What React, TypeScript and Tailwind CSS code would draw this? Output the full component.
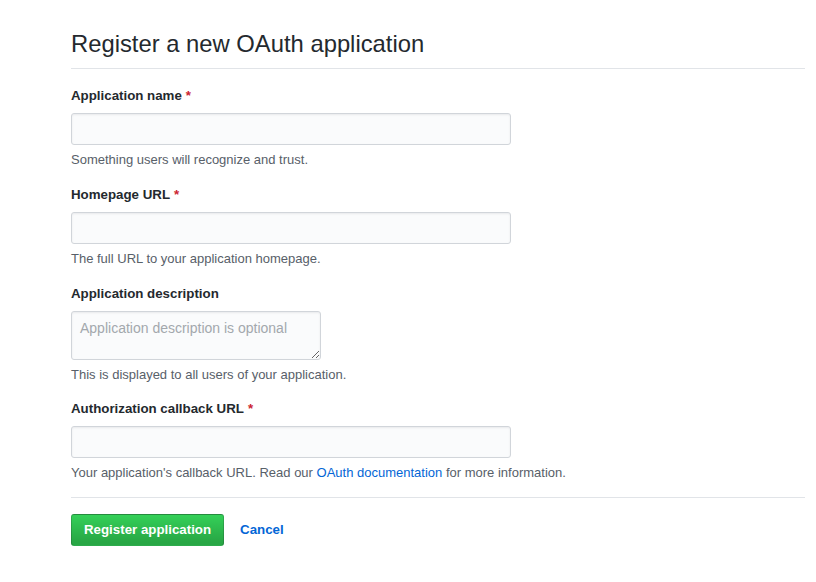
import React from "react";

type FieldProps = {
    label: string;
    required?: boolean;
    note: React.ReactNode;
    children: React.ReactNode;
    gapClass?: string;
};

function Field({ label, required, note, children, gapClass = "mb-[16px]" }: FieldProps) {
    return (
        <dl className={gapClass}>
            <dt className="mb-[7px] h-[20px]">
                <label className="block text-[13.3px] leading-[20px] font-bold text-[#24292e]">
                    {label}
                    {required && <span className="text-[#cb2431] ml-[4px]">*</span>}
                </label>
            </dt>
            <dd>
                {children}
                <p className="mt-[6px] text-[13px] leading-[18px] text-[#586069]">{note}</p>
            </dd>
        </dl>
    );
}

const inputClass =
    "block w-[440px] h-[32px] px-[8px] text-[14px] bg-[#fafbfc] border border-[#d1d5da] rounded-[3px] shadow-[inset_0_1px_2px_rgba(27,31,35,0.075)] outline-none";

export default function App() {
    return (
        <div
            className="min-h-[582px] bg-white pl-[71px] pr-[11px] text-[#24292e] leading-[20px]"
            style={{ fontFamily: '"Liberation Sans", Arial, sans-serif' }}
        >
            <h2 className="pt-[26px] pb-[6px] text-[23.8px] leading-[36px] font-normal border-b border-[#e1e4e8]">
                Register a new OAuth application
            </h2>

            <form className="pt-[17px]" onSubmit={(e) => e.preventDefault()}>
                <Field label="Application name" required note="Something users will recognize and trust.">
                    <input type="text" className={inputClass} />
                </Field>

                <Field label="Homepage URL" required note="The full URL to your application homepage.">
                    <input type="text" className={inputClass} />
                </Field>

                <Field
                    label="Application description"
                    gapClass="mb-[15px]"
                    note="This is displayed to all users of your application."
                >
                    <textarea
                        placeholder="Application description is optional"
                        className="block w-[250px] h-[49px] px-[8px] py-[6px] text-[14px] leading-[20px] bg-[#fafbfc] border border-[#d1d5da] rounded-[3px] shadow-[inset_0_1px_2px_rgba(27,31,35,0.075)] outline-none placeholder:text-[#a3a8ad]"
                    />
                </Field>

                <Field
                    label="Authorization callback URL"
                    required
                    gapClass=""
                    note={
                        <>
                            Your application's callback URL. Read our{" "}
                            <a href="#" className="text-[#0366d6]">OAuth documentation</a> for more information.
                        </>
                    }
                >
                    <input type="text" className={inputClass} />
                </Field>

                <div className="mt-[15px] pt-[16px] border-t border-[#e1e4e8] flex items-center gap-[16px]">
                    <button
                        type="submit"
                        className="h-[32px] px-[12px] text-[13.3px] leading-[20px] font-bold text-white rounded-[3px] border border-[rgba(27,31,35,0.2)] bg-linear-to-b from-[#34d058] to-[#28a745] to-90%"
                    >
                        Register application
                    </button>
                    <a href="#" className="text-[13.3px] font-bold text-[#0366d6]">Cancel</a>
                </div>
            </form>
        </div>
    );
}
